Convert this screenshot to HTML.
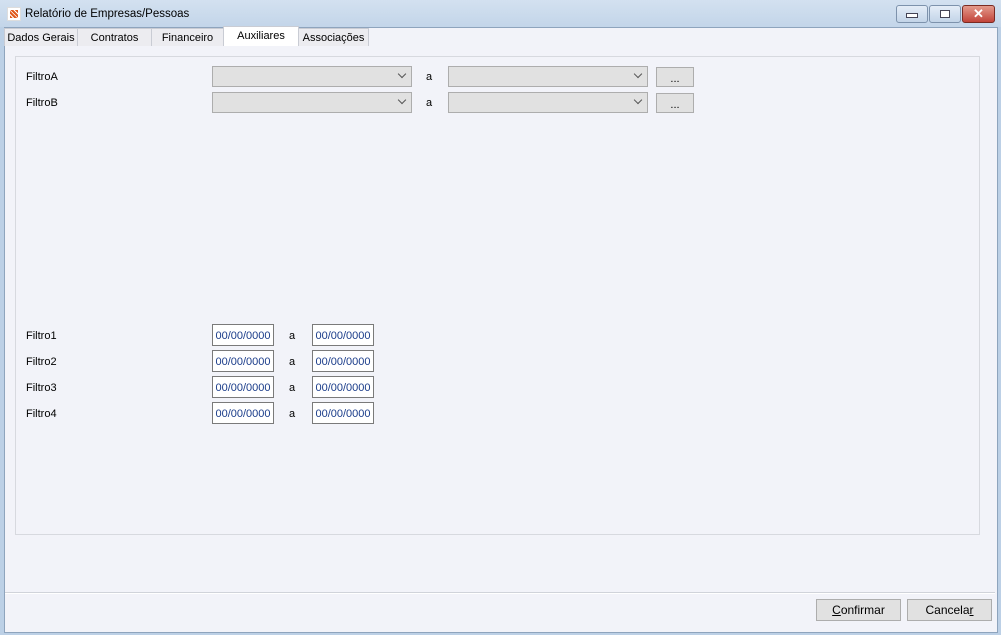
<!DOCTYPE html><html><head><style>
body{margin:0;width:1001px;height:635px;overflow:hidden;background:#bcd0e6;font-family:"Liberation Sans",sans-serif;font-size:11px;color:#000;position:relative}
.a{position:absolute}
.win{left:4px;top:27px;width:992px;height:604px;background:#f2f3f9;border:1px solid #8ea4bd}
.tab{position:absolute;top:28px;height:17px;background:#ececf0;border:1px solid #c9ccd4;border-bottom:none;text-align:center;line-height:19px}
.cb{position:absolute;width:198px;height:19px;background:#e1e1e1;border:1px solid #adadad}
.cb:after{content:"";position:absolute;right:6px;top:4px;width:5px;height:5px;border-right:1px solid #555;border-bottom:1px solid #555;transform:rotate(45deg)}
.bt{position:absolute;width:36px;height:18px;background:#e1e1e1;border:1px solid #adadad;text-align:center;line-height:22px}
.dt{position:absolute;width:60px;height:20px;background:#fff;border:1px solid #7a7a7a;color:#1a3c8a;font-size:11px;line-height:22px;text-align:center}
.lb{position:absolute;left:26px}
.btn{position:absolute;top:599px;height:20px;background:#e1e1e1;border:1px solid #adadad;text-align:center;line-height:21px;font-size:12px}
</style></head><body>
<div class="a" style="left:0;top:0;width:1001px;height:27px;background:linear-gradient(#d3e1f0,#c3d5e9)"></div>
<div class="a" style="left:7px;top:7px;width:12px;height:12px;background:#fff;border:1px solid #ddd"><div style="margin:2px;width:8px;height:8px;background:repeating-linear-gradient(45deg,#e05a1c 0 2px,#fff 2px 3px)"></div></div>
<div class="a" style="left:25px;top:8px;font-size:11.5px">Relatório de Empresas/Pessoas</div>
<div class="a" style="left:896px;top:5px;width:30px;height:16px;border:1px solid #7d92ac;border-radius:3px;background:linear-gradient(#e4edf7,#c3d4e8)"><div style="margin:7px auto 0;width:10px;height:3px;background:#fff;border:1px solid #445"></div></div>
<div class="a" style="left:929px;top:5px;width:30px;height:16px;border:1px solid #7d92ac;border-radius:3px;background:linear-gradient(#e4edf7,#c3d4e8)"><div style="margin:4px auto 0;width:8px;height:6px;border:1px solid #445;background:#fff"></div></div>
<div class="a" style="left:962px;top:5px;width:31px;height:16px;border:1px solid #7a2a22;border-radius:3px;background:linear-gradient(#e39a8c,#c2443a);color:#fff;font-weight:bold;text-align:center;font-size:13px;line-height:16px">✕</div>
<div class="win a"></div>
<div class="tab" style="left:4px;width:72px">Dados Gerais</div>
<div class="tab" style="left:77px;width:73px">Contratos</div>
<div class="tab" style="left:151px;width:71px">Financeiro</div>
<div class="tab" style="left:223px;top:26px;height:19px;width:74px;background:#fff">Auxiliares</div>
<div class="tab" style="left:298px;width:69px">Associações</div>
<div class="a" style="left:15px;top:56px;width:963px;height:477px;border:1px solid #d7d9df;background:#f2f3f9"></div>
<div class="lb" style="top:71px">FiltroA</div><div class="lb" style="top:97px">FiltroB</div>
<div class="cb" style="left:212px;top:66px"></div><div class="cb" style="left:448px;top:66px"></div>
<div class="cb" style="left:212px;top:92px"></div><div class="cb" style="left:448px;top:92px"></div>
<div class="a" style="left:426px;top:71px">a</div><div class="a" style="left:426px;top:97px">a</div>
<div class="bt" style="left:656px;top:67px">...</div><div class="bt" style="left:656px;top:93px">...</div>
<div class="lb" style="top:330px">Filtro1</div><div class="lb" style="top:356px">Filtro2</div><div class="lb" style="top:382px">Filtro3</div><div class="lb" style="top:408px">Filtro4</div>
<div class="dt" style="left:212px;top:324px">00/00/0000</div><div class="dt" style="left:312px;top:324px">00/00/0000</div>
<div class="dt" style="left:212px;top:350px">00/00/0000</div><div class="dt" style="left:312px;top:350px">00/00/0000</div>
<div class="dt" style="left:212px;top:376px">00/00/0000</div><div class="dt" style="left:312px;top:376px">00/00/0000</div>
<div class="dt" style="left:212px;top:402px">00/00/0000</div><div class="dt" style="left:312px;top:402px">00/00/0000</div>
<div class="a" style="left:289px;top:330px">a</div><div class="a" style="left:289px;top:356px">a</div><div class="a" style="left:289px;top:382px">a</div><div class="a" style="left:289px;top:408px">a</div>
<div class="a" style="left:5px;top:592px;width:990px;height:1px;background:#fff;border-top:1px solid #d0d3da"></div>
<div class="btn" style="left:816px;width:83px"><u>C</u>onfirmar</div>
<div class="btn" style="left:907px;width:83px">Cancela<u>r</u></div>
</body></html>
